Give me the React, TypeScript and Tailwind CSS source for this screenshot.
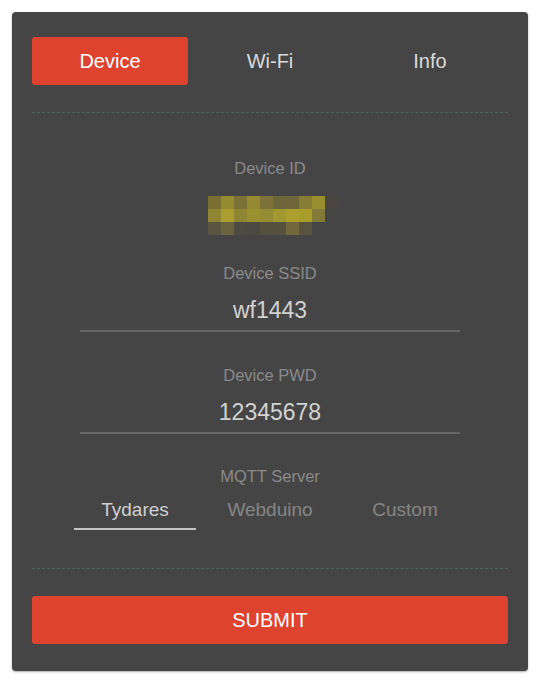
const tabs = ["Device", "Wi-Fi", "Info"];
const servers = ["Tydares", "Webduino", "Custom"];

const blob = [
  ["#7a6e32", "#948a2f", "#7c7237", "#958a31", "#7b7139", "#6d653b", "#6e673b", "#877d34", "#9a8f30", "#4a4740"],
  ["#908533", "#a99e2f", "#8f8633", "#9a9031", "#958b32", "#a19831", "#ad9f2d", "#a89c2d", "#837a3a", ""],
  ["#5a5440", "#6b6340", "#4d4a42", "#4b4942", "#55513f", "#55513f", "#716840", "#57533f", "", ""],
];

function Field({ label, value }: { label: string; value: string }) {
  return (
    <div className="flex flex-col items-center">
      <div className="text-[16.5px] leading-[20px] text-[#8a8a8a]">{label}</div>
      <div className="mt-[13px] w-[380px] border-b-2 border-[#666666] pb-[6px] text-center text-[23px] leading-[28px] text-[#d2d2d2]">
        {value}
      </div>
    </div>
  );
}

export default function App() {
  return (
    <div className="min-h-[683px] bg-white pt-[12px] pl-[12px] font-['Liberation_Sans',Arial,sans-serif]">
      <div className="w-[516px] h-[659px] rounded-[4px] bg-[#454545] px-[20px] pt-[25px] shadow-[0_1px_2px_rgba(0,0,0,0.35)]">
        <div className="grid grid-cols-3 gap-[4px]">
          {tabs.map((tab, i) => (
            <div
              key={tab}
              className={
                i === 0
                  ? "flex h-[48px] items-center justify-center rounded-[3px] bg-[#dd432e] text-[20px] text-white"
                  : "flex h-[48px] items-center justify-center text-[20px] text-[#dadada]"
              }
            >
              {tab}
            </div>
          ))}
        </div>

        <div className="mt-[27px] border-t border-dashed border-[#52605f]" />

        <div className="mt-[45px] flex flex-col items-center">
          <div className="text-[16.5px] leading-[20px] text-[#8a8a8a]">Device ID</div>
          <div className="mt-[18px] ml-[6px] flex flex-col">
            {blob.map((row, r) => (
              <div key={r} className="flex">
                {row.map((c, k) => (
                  <div key={k} className="h-[13px] w-[13px]" style={{ backgroundColor: c || "transparent" }} />
                ))}
              </div>
            ))}
          </div>
        </div>

        <div className="mt-[28px]">
          <Field label="Device SSID" value="wf1443" />
        </div>
        <div className="mt-[33px]">
          <Field label="Device PWD" value="12345678" />
        </div>

        <div className="mt-[32px] flex flex-col items-center">
          <div className="text-[16.5px] leading-[20px] text-[#8a8a8a]">MQTT Server</div>
          <div className="mt-[12px] grid w-[405px] grid-cols-3">
            {servers.map((s, i) => (
              <div key={s} className="flex flex-col items-center">
                <div className={i === 0 ? "text-[19px] leading-[24px] text-[#d0d0d0]" : "text-[19px] leading-[24px] text-[#858585]"}>
                  {s}
                </div>
                <div className={i === 0 ? "mt-[6px] h-[2px] w-[122px] bg-[#c4c4c4]" : "mt-[6px] h-[2px] w-[122px]"} />
              </div>
            ))}
          </div>
        </div>

        <div className="mt-[38px] border-t border-dashed border-[#52605f]" />

        <button className="mt-[27px] flex h-[48px] w-full items-center justify-center rounded-[3px] bg-[#dd432e] text-[20px] text-white">
          SUBMIT
        </button>
      </div>
    </div>
  );
}
